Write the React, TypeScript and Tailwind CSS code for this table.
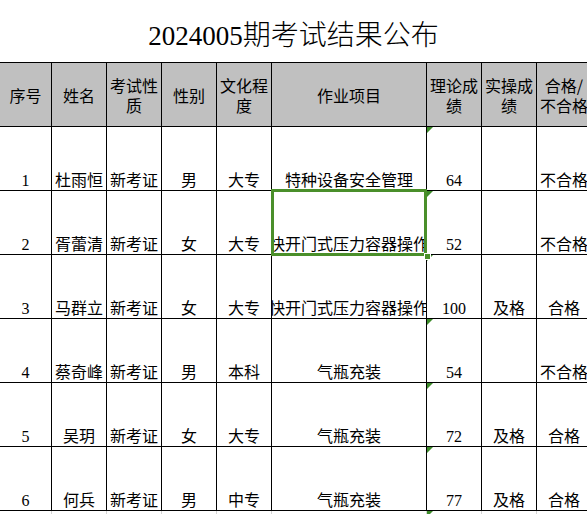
import React from "react";

const COLS =
  "grid grid-cols-[52px_55px_55px_55px_55px_155px_55px_55px_55px] w-[592px]";

type Row = string[];

const rows: Row[] = [
  ["1", "杜雨恒", "新考证", "男", "大专", "特种设备安全管理", "64", "", "不合格"],
  ["2", "胥蕾清", "新考证", "女", "大专", "快开门式压力容器操作", "52", "", "不合格"],
  ["3", "马群立", "新考证", "女", "大专", "快开门式压力容器操作", "100", "及格", "合格"],
  ["4", "蔡奇峰", "新考证", "男", "本科", "气瓶充装", "54", "", "不合格"],
  ["5", "吴玥", "新考证", "女", "大专", "气瓶充装", "72", "及格", "合格"],
  ["6", "何兵", "新考证", "男", "中专", "气瓶充装", "77", "及格", "合格"],
];

function HeaderCell({ children }: { children: React.ReactNode }) {
  return (
    <div className="h-[64px] bg-[#c0c0c0] border-r border-b border-black flex items-center justify-center text-center text-[16px] leading-[20px] text-black font-['Noto_Sans_CJK_SC',sans-serif]">
      <div className="whitespace-nowrap">{children}</div>
    </div>
  );
}

function DataCell({ text, mark }: { text: string; mark?: boolean }) {
  return (
    <div className="relative h-[64px] border-r border-b border-black flex items-end justify-center overflow-hidden whitespace-nowrap text-[16px] leading-[18px] text-black font-['Liberation_Serif','Noto_Sans_CJK_SC',serif]">
      {mark && (
        <div className="absolute top-0 left-0 w-0 h-0 border-t-[6px] border-t-[#3d8b2a] border-r-[6px] border-r-transparent" />
      )}
      <span className="shrink-0">{text}</span>
    </div>
  );
}

export default function App() {
  return (
    <div className="relative w-[587px] h-[514px] overflow-hidden bg-white">
      <div className="h-[62px] flex items-start justify-center pt-[15px] text-black">
        <div className="flex items-baseline">
          <span className="text-[27px] leading-[36px] font-['Liberation_Serif',serif]">2024005</span>
          <span className="text-[28px] leading-[36px] font-light font-['Noto_Sans_CJK_SC',sans-serif]">
            期考试结果公布
          </span>
        </div>
      </div>
      <div className={`${COLS} border-t border-black`}>
        <HeaderCell>序号</HeaderCell>
        <HeaderCell>姓名</HeaderCell>
        <HeaderCell>
          考试性
          <br />质
        </HeaderCell>
        <HeaderCell>性别</HeaderCell>
        <HeaderCell>
          文化程
          <br />度
        </HeaderCell>
        <HeaderCell>作业项目</HeaderCell>
        <HeaderCell>
          理论成
          <br />绩
        </HeaderCell>
        <HeaderCell>
          实操成
          <br />绩
        </HeaderCell>
        <HeaderCell>
          合格/
          <br />
          不合格
        </HeaderCell>
        {rows.map((r, i) => (
          <React.Fragment key={i}>
            {r.map((t, j) => (
              <DataCell key={j} text={t} mark={j === 6} />
            ))}
          </React.Fragment>
        ))}
        {Array.from({ length: 9 }).map((_, j) => (
          <div key={`e${j}`} className="relative h-[20px] border-r border-[#d4d4d4]">
            {j === 6 && (
              <div className="absolute top-0 left-0 w-0 h-0 border-t-[6px] border-t-[#3d8b2a] border-r-[6px] border-r-transparent" />
            )}
          </div>
        ))}
      </div>
      {/* selection box */}
      <div className="absolute left-[271px] top-[189px] w-[156px] h-[67px] border-[3px] border-[#4a8f2a]" />
      <div className="absolute left-[424px] top-[253px] w-[7px] h-[7px] bg-[#4a8f2a] border border-white" />
    </div>
  );
}
